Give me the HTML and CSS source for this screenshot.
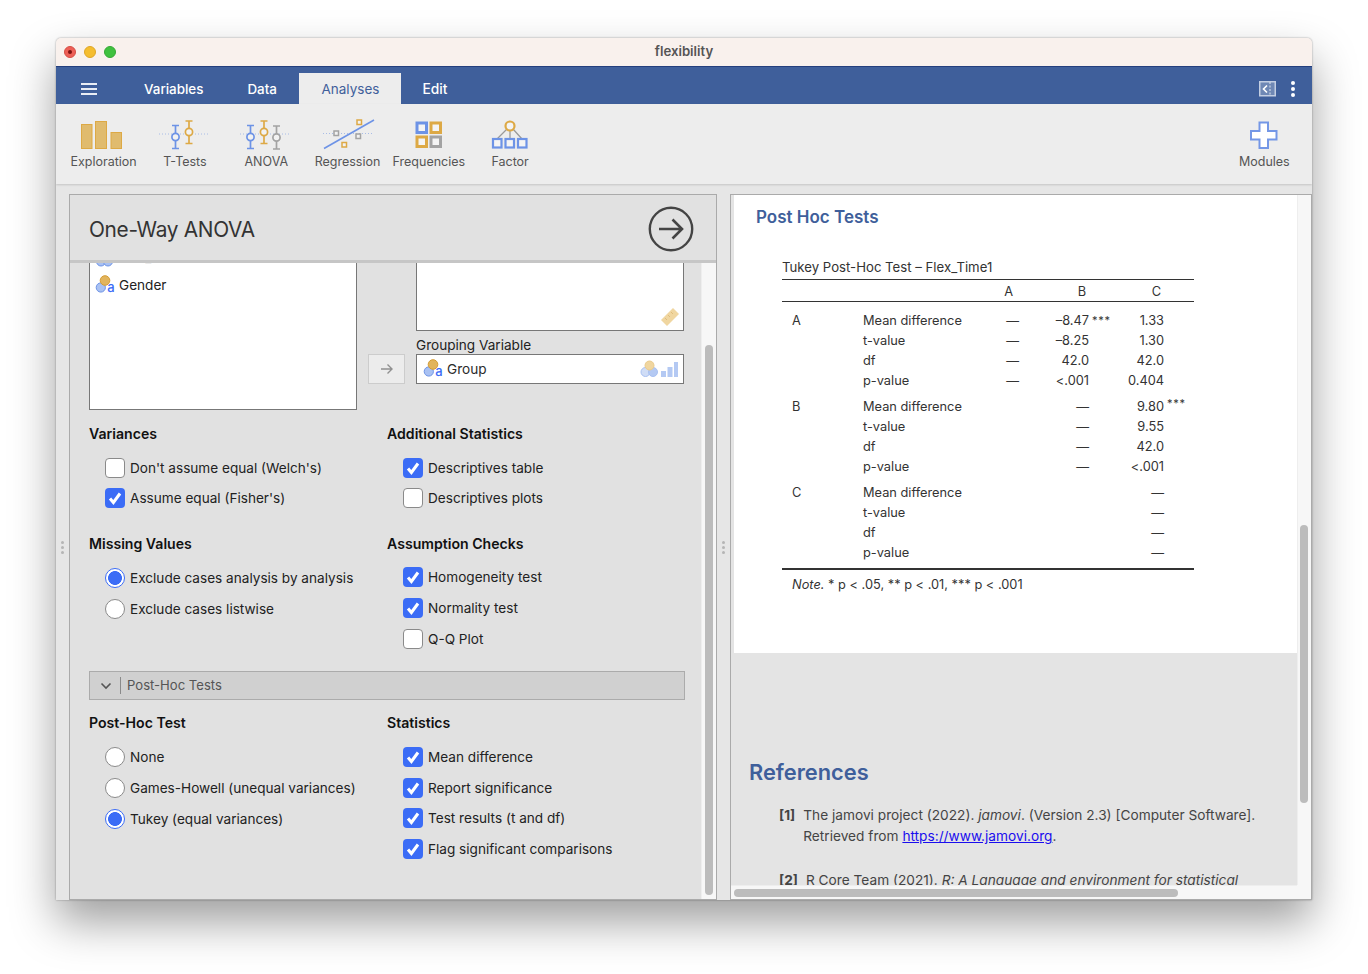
FILE: index.html
```html
<!DOCTYPE html>
<html lang="en">
<head>
    <meta charset="UTF-8">
    <meta name="viewport" content="width=device-width, initial-scale=1.0">
    <title>flexibility</title>
    <link rel="stylesheet" href="styles.css">
</head>
<body>
    <svg class="sprite" xmlns="http://www.w3.org/2000/svg">
        <symbol id="check" viewBox="0 0 20 20">
            <path d="M5 10.5l3.4 4L15 5.5" fill="none" stroke="#fff" stroke-width="3"/>
        </symbol>
        <symbol id="nominal" viewBox="0 0 20 20">
            <circle cx="5.800" cy="12.500" r="4.600" fill="#a9c1f2" stroke="#6d93e6"/>
            <circle cx="10" cy="5.500" r="4.800" fill="#e2b45c" stroke="#d49c35"/>
            <text x="12.300" y="17.300" class="sprite-a">a</text>
        </symbol>
    </svg>

    <div class="window">
        <div class="titlebar">
            <div class="lights">
                <span class="light red"><i></i></span>
                <span class="light yellow"></span>
                <span class="light green"></span>
            </div>
            <div class="window-title">flexibility</div>
        </div>

        <nav class="tabs">
            <div class="burger"><i></i><i></i><i></i></div>
            <a class="tab tab-variables">Variables</a>
            <a class="tab tab-data">Data</a>
            <a class="tab tab-analyses">Analyses</a>
            <a class="tab tab-edit">Edit</a>
            <div class="tabs-right">
                <svg width="17" height="16" viewBox="0 0 17 16">
                    <rect x="0.75" y="0.75" width="15.5" height="14" fill="#6f88b5" stroke="#c3cee2" stroke-width="1.5"/>
                    <path d="M8 4.5L4.5 8 8 11.5" fill="none" stroke="#fff" stroke-width="1.6"/>
                    <path d="M11 1v14" stroke="#dfe5f0" stroke-dasharray="2 1.5"/>
                </svg>
                <div class="kebab"><i></i><i></i><i></i></div>
            </div>
        </nav>

        <div class="ribbon">
            <div class="ribbon-btn">
                <svg width="60" height="34" viewBox="0 0 60 34">
                    <g fill="#e0bb6e" stroke="#dda945">
                        <rect x="7.5" y="6.5" width="10.5" height="24"/>
                        <rect x="21.5" y="3.5" width="11" height="27"/>
                        <rect x="37" y="14.5" width="10.5" height="16"/>
                    </g>
                </svg>
                <span>Exploration</span>
            </div>
            <div class="ribbon-btn">
                <svg width="60" height="34" viewBox="0 0 60 34" fill="#f2f2f2" stroke-width="1.7">
                    <path d="M4 16h50" stroke="#a8bce6" stroke-width="1" stroke-dasharray="1 2"/>
                    <g stroke="#6d93e6">
                        <path d="M17 7.5h7M20.5 7.5v23M17 30.5h7"/>
                        <circle cx="20.5" cy="19" r="3.6"/>
                    </g>
                    <g stroke="#dda945">
                        <path d="M30.5 3h7M34 3v22.5M30.5 25.500h7"/>
                        <circle cx="34" cy="14" r="3.6"/>
                    </g>
                </svg>
                <span>T-Tests</span>
            </div>
            <div class="ribbon-btn">
                <svg width="60" height="34" viewBox="0 0 60 34" fill="#f2f2f2" stroke-width="1.7">
                    <path d="M4 16h50" stroke="#a8bce6" stroke-width="1" stroke-dasharray="1 2"/>
                    <g stroke="#6d93e6">
                        <path d="M11 7.500h7M14.500 7.500v23M11 30.500h7"/>
                        <circle cx="14.500" cy="19" r="3.600"/>
                    </g>
                    <g stroke="#dda945">
                        <path d="M24.500 3h7M28 3v22.500M24.500 25.500h7"/>
                        <circle cx="28" cy="14" r="3.600"/>
                    </g>
                    <g stroke="#a3a3a3">
                        <path d="M37 8h7M40.500 8v23M37 31h7"/>
                        <circle cx="40.500" cy="19.500" r="3.600"/>
                    </g>
                </svg>
                <span>ANOVA</span>
            </div>
            <div class="ribbon-btn">
                <svg width="60" height="34" viewBox="0 0 60 34" fill="#f2f2f2" stroke-width="1.500">
                    <path d="M5 15.500h50" stroke="#a8bce6" stroke-width="1" stroke-dasharray="1 2"/>
                    <path d="M6 30.500L56 2" stroke="#6d93e6" stroke-width="1.600"/>
                    <rect x="16" y="13" width="4.500" height="4.500" stroke="#a3a3a3"/>
                    <rect x="39" y="2" width="4.500" height="4.500" stroke="#dda945"/>
                    <rect x="38" y="16" width="4.500" height="4.500" stroke="#a3a3a3"/>
                    <rect x="24" y="24.500" width="4.500" height="4.500" stroke="#dda945"/>
                </svg>
                <span>Regression</span>
            </div>
            <div class="ribbon-btn">
                <svg width="60" height="34" viewBox="0 0 60 34" fill="#f4f4f4" stroke-width="3">
                    <rect x="18" y="5" width="9.500" height="9.500" stroke="#6d93e6"/>
                    <rect x="32" y="5" width="9.500" height="9.500" stroke="#dda945"/>
                    <rect x="18" y="19" width="9.500" height="9.500" stroke="#dda945"/>
                    <rect x="32" y="19" width="9.500" height="9.500" stroke="#a3a3a3"/>
                </svg>
                <span>Frequencies</span>
            </div>
            <div class="ribbon-btn">
                <svg width="60" height="34" viewBox="0 0 60 34" fill="#f4f4f4">
                    <path d="M27 11L17 21M30 12v9M33 11l9 10" stroke="#9a9a9a" stroke-width="1.300"/>
                    <circle cx="30" cy="8" r="4.500" stroke="#dda945" stroke-width="2.200"/>
                    <g stroke="#6d93e6" stroke-width="2.200">
                        <rect x="13" y="21" width="8.500" height="8.500"/>
                        <rect x="25.500" y="21" width="8.500" height="8.500"/>
                        <rect x="38" y="21" width="8.500" height="8.500"/>
                    </g>
                </svg>
                <span>Factor</span>
            </div>
            <div class="ribbon-btn modules-btn">
                <svg width="60" height="34" viewBox="0 0 60 34">
                    <path d="M25.500 4.500h8.500v8.500h8.500v8.500H34V30h-8.500v-8.500H17V13h8.500z" fill="#fff" stroke="#7497e6" stroke-width="2"/>
                </svg>
                <span>Modules</span>
            </div>
        </div>

        <div class="workspace">
            <div class="grip"><i></i><i></i><i></i></div>

            <section class="options">
                <header class="options-head">
                    <h2>One-Way ANOVA</h2>
                    <svg width="46" height="46" viewBox="0 0 46 46">
                        <circle cx="23" cy="23" r="21.200" fill="none" stroke="#444" stroke-width="2.400"/>
                        <path d="M11 23h23M24.500 13.500L34 23l-9.500 9.500" fill="none" stroke="#444" stroke-width="2.600"/>
                    </svg>
                </header>

                <div class="options-body">
                    <div class="options-scroll">
                        <div class="vars">
                            <div class="var-list">
                                <div class="var-rows">
                                    <div class="var-row">
                                        <svg width="20" height="20" viewBox="0 0 20 20">
                                            <circle cx="6" cy="14.500" r="4.500" fill="#a9c1f2" stroke="#6d93e6"/>
                                            <circle cx="13" cy="14.500" r="4.500" fill="#a9c1f2" stroke="#6d93e6"/>
                                        </svg>
                                        Flex_Time2
                                    </div>
                                    <div class="var-row">
                                        <svg width="20" height="20"><use href="#nominal"/></svg>
                                        Gender
                                    </div>
                                </div>
                            </div>

                            <div class="var-move">
                                <div class="arrow-btn">
                                    <svg width="14" height="12" viewBox="0 0 14 12">
                                        <path d="M1 6h11M7.500 1.500L12 6l-4.500 4.500" fill="none" stroke="#909090" stroke-width="1.400"/>
                                    </svg>
                                </div>
                            </div>

                            <div class="var-targets">
                                <div class="target-list">
                                    <svg width="20" height="20" viewBox="0 0 20 20">
                                        <path d="M1 13L13 1l6 6L7 19z" fill="#f0d6a0"/>
                                        <path d="M5 11l2 2M8 8l2 2M11 5l2 2" stroke="#e0bd7c"/>
                                    </svg>
                                </div>
                                <div class="target-label">Grouping Variable</div>
                                <div class="target-one">
                                    <svg width="20" height="20"><use href="#nominal"/></svg>
                                    <span class="target-name">Group</span>
                                    <svg width="38" height="18" viewBox="0 0 38 18">
                                        <circle cx="5.500" cy="12" r="4.500" fill="#d0ddf6" stroke="#a9c1f2"/>
                                        <circle cx="13" cy="12" r="4.500" fill="#b4c9f3" stroke="#a9c1f2"/>
                                        <circle cx="9.500" cy="5.500" r="4.500" fill="#f0d6a0" stroke="#eacb8c"/>
                                        <path d="M21 11h5v6h-5zM27.500 7h5v10h-5zM34 2h4v15h-4z" fill="#b4c9f3"/>
                                    </svg>
                                </div>
                            </div>
                        </div>

                        <div class="opt-grid">
                            <div class="opt-group tight">
                                <h3>Variances</h3>
                                <label class="opt"><span class="box"></span>Don't assume equal (Welch's)</label>
                                <label class="opt"><span class="box on"><svg width="20" height="20"><use href="#check"/></svg></span>Assume equal (Fisher's)</label>
                            </div>
                            <div class="opt-group tight">
                                <h3>Additional Statistics</h3>
                                <label class="opt"><span class="box on"><svg width="20" height="20"><use href="#check"/></svg></span>Descriptives table</label>
                                <label class="opt"><span class="box"></span>Descriptives plots</label>
                            </div>
                            <div class="opt-group wide">
                                <h3>Missing Values</h3>
                                <label class="opt"><span class="radio on"></span>Exclude cases analysis by analysis</label>
                                <label class="opt"><span class="radio"></span>Exclude cases listwise</label>
                            </div>
                            <div class="opt-group wide raised">
                                <h3>Assumption Checks</h3>
                                <label class="opt"><span class="box on"><svg width="20" height="20"><use href="#check"/></svg></span>Homogeneity test</label>
                                <label class="opt"><span class="box on"><svg width="20" height="20"><use href="#check"/></svg></span>Normality test</label>
                                <label class="opt"><span class="box"></span>Q-Q Plot</label>
                            </div>
                        </div>

                        <div class="collapse-bar">
                            <svg width="12" height="8" viewBox="0 0 12 8">
                                <path d="M1.500 1.500L6 6l4.500-4.500" fill="none" stroke="#555" stroke-width="1.600"/>
                            </svg>
                            <span class="collapse-title">Post-Hoc Tests</span>
                        </div>

                        <div class="opt-grid posthoc">
                            <div class="opt-group wide">
                                <h3>Post-Hoc Test</h3>
                                <label class="opt"><span class="radio"></span>None</label>
                                <label class="opt"><span class="radio"></span>Games-Howell (unequal variances)</label>
                                <label class="opt"><span class="radio on"></span>Tukey (equal variances)</label>
                            </div>
                            <div class="opt-group">
                                <h3>Statistics</h3>
                                <label class="opt"><span class="box on"><svg width="20" height="20"><use href="#check"/></svg></span>Mean difference</label>
                                <label class="opt"><span class="box on"><svg width="20" height="20"><use href="#check"/></svg></span>Report significance</label>
                                <label class="opt"><span class="box on"><svg width="20" height="20"><use href="#check"/></svg></span>Test results (t and df)</label>
                                <label class="opt"><span class="box on"><svg width="20" height="20"><use href="#check"/></svg></span>Flag significant comparisons</label>
                            </div>
                        </div>
                    </div>
                    <div class="vtrack options-track"><div class="vthumb"></div></div>
                </div>
            </section>

            <div class="grip"><i></i><i></i><i></i></div>

            <section class="results">
                <div class="results-view">
                    <div class="result-sheet">
                        <h2 class="result-title">Post Hoc Tests</h2>
                        <table class="posthoc-table">
                            <caption>Tukey Post-Hoc Test – Flex_Time1</caption>
                            <thead>
                                <tr>
                                    <th></th>
                                    <th></th>
                                    <th class="col-a">A</th>
                                    <th class="col-b">B</th>
                                    <th class="col-c">C</th>
                                </tr>
                            </thead>
                            <tbody class="first-group">
                                <tr><td class="rowname">A</td><td>Mean difference</td><td class="col-a">—</td><td class="col-b"><span class="num">–8.47<span class="sig sig-low">***</span></span></td><td class="col-c">1.33</td></tr>
                                <tr><td></td><td>t-value</td><td class="col-a">—</td><td class="col-b">–8.25</td><td class="col-c">1.30</td></tr>
                                <tr><td></td><td>df</td><td class="col-a">—</td><td class="col-b">42.0</td><td class="col-c">42.0</td></tr>
                                <tr><td></td><td>p-value</td><td class="col-a">—</td><td class="col-b">&lt;.001</td><td class="col-c">0.404</td></tr>
                            </tbody>
                            <tbody>
                                <tr><td class="rowname">B</td><td>Mean difference</td><td class="col-a"></td><td class="col-b">—</td><td class="col-c"><span class="num">9.80<span class="sig">***</span></span></td></tr>
                                <tr><td></td><td>t-value</td><td class="col-a"></td><td class="col-b">—</td><td class="col-c">9.55</td></tr>
                                <tr><td></td><td>df</td><td class="col-a"></td><td class="col-b">—</td><td class="col-c">42.0</td></tr>
                                <tr><td></td><td>p-value</td><td class="col-a"></td><td class="col-b">—</td><td class="col-c">&lt;.001</td></tr>
                            </tbody>
                            <tbody class="last-group">
                                <tr><td class="rowname">C</td><td>Mean difference</td><td class="col-a"></td><td class="col-b"></td><td class="col-c">—</td></tr>
                                <tr><td></td><td>t-value</td><td class="col-a"></td><td class="col-b"></td><td class="col-c">—</td></tr>
                                <tr><td></td><td>df</td><td class="col-a"></td><td class="col-b"></td><td class="col-c">—</td></tr>
                                <tr><td></td><td>p-value</td><td class="col-a"></td><td class="col-b"></td><td class="col-c">—</td></tr>
                            </tbody>
                            <tfoot>
                                <tr><td colspan="5"><em>Note.</em> * p &lt; .05, ** p &lt; .01, *** p &lt; .001</td></tr>
                            </tfoot>
                        </table>
                    </div>

                    <div class="references">
                        <h2>References</h2>
                        <div class="ref">
                            <b>[1]</b>
                            <p>The jamovi project (2022). <em>jamovi</em>. (Version 2.3) [Computer Software]. Retrieved from <a href="#">https://www.jamovi.org</a>.</p>
                        </div>
                        <div class="ref ref-two">
                            <b>[2]</b>
                            <p>R Core Team (2021). <em>R: A Language and environment for statistical</em></p>
                        </div>
                    </div>
                </div>
                <div class="vtrack results-track"><div class="vthumb"></div></div>
                <div class="htrack"><div class="hthumb"></div></div>
                <div class="corner"></div>
            </section>
        </div>
    </div>
</body>
</html>
```

FILE: styles.css
```css
:root {
    --blue: #3f5f9b;
    --check: #3b6cf6;
    --panel: #e1e1e1;
    --ribbon: #ededed;
    --text: #2b2b2b;
}

* {
    margin: 0;
    padding: 0;
    box-sizing: border-box;
    font-family: Inter, "Liberation Sans", sans-serif;
}

html, body {
    height: 974px;
    overflow: hidden;
}

body {
    background: #fff;
    padding: 38px 56px 74px;
    color: var(--text);
    font-size: 13.6px;
}

.sprite {
    display: none;
}

.sprite-a {
    font-size: 13px;
    font-weight: 500;
    fill: #3b6cf6;
}

.window {
    height: 862px;
    display: flex;
    flex-direction: column;
    border-radius: 5px 5px 0 0;
    background: #e6e6e6;
    box-shadow: 0 22px 45px rgba(0, 0, 0, 0.38), 0 0 2px rgba(0, 0, 0, 0.4);
    overflow: hidden;
}

/* title bar */
.titlebar {
    height: 28px;
    flex: none;
    background: #f9f1ed;
    display: flex;
    align-items: center;
    padding: 0 8px;
    position: relative;
}

.lights {
    display: flex;
    gap: 8px;
}

.light {
    width: 12px;
    height: 12px;
    border-radius: 50%;
    display: flex;
    align-items: center;
    justify-content: center;
}

.light i {
    width: 4px;
    height: 4px;
    border-radius: 50%;
    background: #7d1210;
}

.red { background: #ed5f56; border: 1px solid #d64e45; }
.yellow { background: #f5bd2f; border: 1px solid #dfa626; }
.green { background: #3fc13f; border: 1px solid #35a935; }

.window-title {
    flex: 1;
    text-align: center;
    font-size: 13.2px;
    font-weight: 600;
    color: #555;
    margin: 0 52px 2px 0;
}

/* tab strip */
.tabs {
    height: 38px;
    flex: none;
    background: var(--blue);
    border-top: 1px solid #243f7d;
    display: flex;
    align-items: flex-end;
    color: #fff;
    font-size: 13.4px;
    font-weight: 500;
}

.burger {
    width: 16px;
    margin: 0 0 9px 25px;
    display: flex;
    flex-direction: column;
    gap: 3px;
}

.burger i {
    height: 2px;
    background: #e9edf5;
}

.tab {
    height: 31px;
    display: flex;
    align-items: center;
}

.tab-variables { margin-left: 47px; }
.tab-data { margin-left: 44px; }
.tab-analyses {
    margin-left: 22.5px;
    width: 102px;
    justify-content: center;
    background: var(--ribbon);
    color: var(--blue);
    font-size: 13.5px;
    font-weight: 400;
}
.tab-edit { margin-left: 21px; font-size: 13.8px; }

.tabs-right {
    margin: 0 17px 7px auto;
    display: flex;
    align-items: center;
    gap: 15px;
}

.kebab {
    display: flex;
    flex-direction: column;
    gap: 2px;
}

.kebab i {
    width: 4px;
    height: 4px;
    border-radius: 50%;
    background: #fff;
}

/* ribbon */
.ribbon {
    height: 80px;
    flex: none;
    background: var(--ribbon);
    display: flex;
    padding: 14px 0 0 7px;
    box-shadow: 0 1px 2px rgba(0, 0, 0, 0.15);
    position: relative;
}

.ribbon-btn {
    width: 81.3px;
    display: flex;
    flex-direction: column;
    align-items: center;
    color: #555;
    font-size: 12.5px;
}

.ribbon-btn span {
    margin-top: 2px;
    white-space: nowrap;
}

.modules-btn {
    margin-left: auto;
    margin-right: 7px;
}

/* panels */
.workspace {
    flex: 1;
    min-height: 0;
    display: flex;
    padding-top: 10px;
}

.grip {
    width: 13px;
    flex: none;
    display: flex;
    flex-direction: column;
    justify-content: center;
    align-items: center;
    gap: 2px;
}

.grip i {
    width: 3px;
    height: 3px;
    border-radius: 50%;
    background: #b5b5b5;
}

.options {
    width: 648px;
    flex: none;
    display: flex;
    flex-direction: column;
    background: var(--panel);
    border: 1px solid #aaa;
}

.options-head {
    height: 68px;
    flex: none;
    display: flex;
    align-items: center;
    justify-content: space-between;
    padding: 3px 22px 0 19px;
    border-bottom: 3px solid #c6c6c6;
}

.options-head h2 {
    font-size: 20.8px;
    font-weight: 400;
    letter-spacing: -0.3px;
    color: #333;
}

.options-body {
    flex: 1;
    min-height: 0;
    display: flex;
}

.options-scroll {
    flex: 1;
    padding-left: 19px;
    overflow: hidden;
}

.vtrack {
    width: 15px;
    flex: none;
    background: #f7f7f7;
    border-left: 1px solid #eee;
    padding-left: 3px;
}

.vthumb {
    width: 8px;
    background: #bcbcbc;
    border-radius: 4px;
}

.options-track {
    padding-top: 82px;
}

.options-track .vthumb {
    height: 550px;
}

/* variable supplier */
.vars {
    display: flex;
    align-items: flex-start;
}

.var-list {
    width: 268px;
    height: 147px;
    background: #fff;
    border: 1px solid #777;
    border-top: none;
    overflow: hidden;
}

.var-rows {
    margin-top: -20px;
    padding-left: 5px;
}

.var-row {
    height: 28px;
    display: flex;
    align-items: center;
    gap: 4px;
    color: #222;
}

.var-move {
    width: 59px;
    padding: 91px 0 0 11px;
}

.arrow-btn {
    width: 37px;
    height: 30px;
    background: #ececec;
    border: 1px solid #ccc;
    display: flex;
    align-items: center;
    justify-content: center;
}

.var-targets {
    width: 268px;
}

.target-list {
    height: 68px;
    background: #fff;
    border: 1px solid #777;
    border-top: none;
    display: flex;
    align-items: flex-end;
    justify-content: flex-end;
    padding: 0 3px 3px 0;
}

.target-label {
    height: 23px;
    line-height: 28px;
    color: #222;
}

.target-one {
    height: 30px;
    background: #fff;
    border: 1px solid #777;
    display: flex;
    align-items: center;
    gap: 4px;
    padding: 0 5px 0 6px;
}

.target-name {
    flex: 1;
}

/* option groups */
.opt-grid {
    display: grid;
    grid-template-columns: 298px 298px;
    row-gap: 26px;
    margin-top: 14px;
}

.opt-group {
    display: flex;
    flex-direction: column;
    gap: 10.67px;
}

.opt-group h3 {
    height: 20px;
    line-height: 20px;
    font-size: 14.1px;
    font-weight: 600;
    color: #111;
    margin-bottom: 3.33px;
}

.opt-group.tight { gap: 10px; }
.opt-group.tight h3 { margin-bottom: 4px; }
.opt-group.wide { gap: 11px; }
.opt-group.wide h3 { margin-bottom: 3px; }
.opt-group.raised h3 { margin-bottom: 2px; }

.opt {
    height: 20px;
    display: flex;
    align-items: center;
    gap: 5px;
    margin-left: 16px;
    white-space: nowrap;
    color: #222;
}

.box {
    width: 20px;
    height: 20px;
    flex: none;
    background: #fff;
    border: 1px solid #8a8a8a;
    border-radius: 4px;
}

.box.on {
    background: var(--check);
    border: none;
}

.box svg {
    display: block;
}

.radio {
    width: 20px;
    height: 20px;
    flex: none;
    background: #fff;
    border: 1px solid #8a8a8a;
    border-radius: 50%;
}

.radio.on {
    border-color: var(--check);
    background: radial-gradient(circle, var(--check) 0, var(--check) 6.6px, #fff 7.2px);
}

.collapse-bar {
    width: 596px;
    height: 29px;
    margin-top: 22px;
    background: #d0d0d0;
    border: 1px solid #ababab;
    display: flex;
    align-items: center;
    padding-left: 10px;
    color: #555;
}

.collapse-title {
    margin-left: 8px;
    padding-left: 6px;
    height: 17px;
    line-height: 17px;
    font-size: 13.1px;
    border-left: 1px solid #8a8a8a;
}

.posthoc {
    margin-top: 13px;
}

/* results */
.results {
    flex: 1;
    min-width: 0;
    display: grid;
    grid-template-columns: 1fr 14px;
    grid-template-rows: 1fr 14px;
    background: #e4e4e4;
    border: 1px solid #aaa;
}

.results-view {
    padding-left: 3px;
    overflow: hidden;
    min-height: 0;
}

.result-sheet {
    height: 458px;
    background: #fff;
    padding: 11px 0 0 22px;
}

.result-title,
.references h2 {
    color: var(--blue);
    font-weight: 600;
}

.result-title {
    font-size: 17px;
    line-height: 22px;
}

.posthoc-table {
    width: 412px;
    margin: 27px 0 0 26px;
    border-collapse: collapse;
    table-layout: fixed;
    font-size: 12.8px;
    color: #333;
}

.posthoc-table caption {
    text-align: left;
    height: 24px;
    line-height: 24px;
    font-size: 13.2px;
}

.posthoc-table th {
    height: 22px;
    padding-top: 2px;
    font-weight: 400;
    border-top: 1px solid #333;
    border-bottom: 1px solid #333;
}

.posthoc-table th:nth-child(1),
.posthoc-table td:nth-child(1) {
    width: 81px;
}

.posthoc-table th:nth-child(2),
.posthoc-table td:nth-child(2) {
    width: 127px;
}

.posthoc-table td {
    height: 20px;
    padding: 0;
    white-space: nowrap;
}

.posthoc-table .rowname {
    padding-left: 10px;
}

.col-a, .col-b, .col-c {
    text-align: right;
}

.posthoc-table .col-a { width: 55px; padding-right: 26px; }
.posthoc-table .col-b { width: 75px; padding-right: 31px; }
.posthoc-table .col-c { width: 74px; padding-right: 30px; }

.posthoc-table th.col-a { padding-right: 32px; }
.posthoc-table th.col-b { padding-right: 34px; }
.posthoc-table th.col-c { padding-right: 33px; }

.posthoc-table tbody tr:first-child td {
    height: 26px;
    padding-top: 6px;
}

.posthoc-table .first-group tr:first-child td {
    height: 29px;
    padding-top: 9px;
}

.posthoc-table .last-group tr:last-child td {
    height: 26px;
    padding-bottom: 6px;
    border-bottom: 2px solid #333;
}

.posthoc-table tfoot td {
    height: 30px;
    padding-left: 10px;
}

.num {
    position: relative;
}

.sig {
    position: absolute;
    left: 100%;
    top: -3px;
    margin-left: 3px;
    font-size: 11px;
    letter-spacing: 0.8px;
}

.sig-low {
    top: 0;
}

.references {
    padding: 104px 30px 0 15px;
}

.references h2 {
    font-size: 21.8px;
    line-height: 30px;
    margin-bottom: 18px;
}

.ref {
    display: flex;
    gap: 8px;
    margin-left: 30px;
    font-size: 13.7px;
    line-height: 21px;
    color: #444;
}

.ref p {
    flex: 1;
}

.ref a {
    color: #1a0dee;
    text-decoration: underline;
}

.ref-two {
    margin-top: 23px;
}

.htrack {
    background: #f7f7f7;
    border-top: 1px solid #eee;
    padding: 3px 0 0 3px;
}

.hthumb {
    width: 444px;
    height: 8px;
    border-radius: 4px;
    background: #bcbcbc;
}

.results-track {
    width: 14px;
    padding: 330px 0 0 2px;
}

.results-track .vthumb {
    height: 278px;
}

.corner {
    background: #f7f7f7;
}
```
